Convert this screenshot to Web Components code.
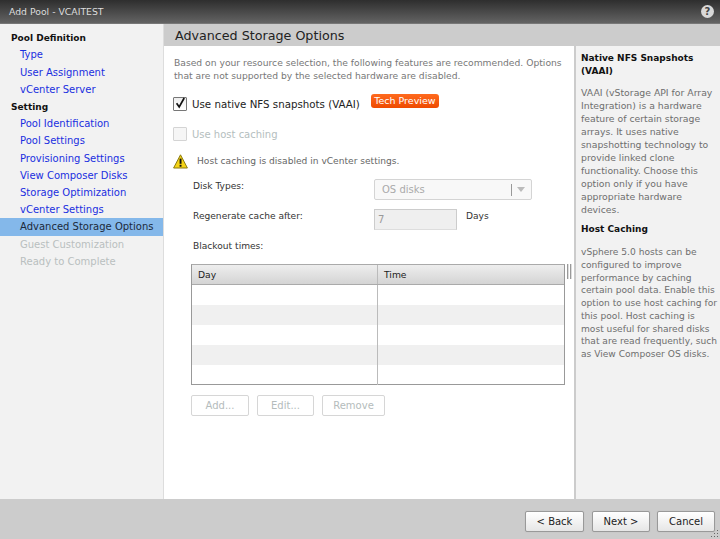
<!DOCTYPE html>
<html>
<head>
<meta charset="utf-8">
<title>Add Pool</title>
<style>
  html, body { margin: 0; padding: 0; background: #ccc; }
  body { font: 10px/13px "DejaVu Sans", sans-serif; color: #333; width: 720px; height: 539px; overflow: hidden; }
</style>
</head>
<body>
<pool-dialog heading="Add Pool - VCAITEST">
  <wizard-nav slot="nav">
    <nav-item kind="group">Pool Definition</nav-item>
    <nav-item>Type</nav-item>
    <nav-item>User Assignment</nav-item>
    <nav-item>vCenter Server</nav-item>
    <nav-item kind="group">Setting</nav-item>
    <nav-item>Pool Identification</nav-item>
    <nav-item>Pool Settings</nav-item>
    <nav-item>Provisioning Settings</nav-item>
    <nav-item>View Composer Disks</nav-item>
    <nav-item>Storage Optimization</nav-item>
    <nav-item>vCenter Settings</nav-item>
    <nav-item kind="current">Advanced Storage Options</nav-item>
    <nav-item kind="disabled">Guest Customization</nav-item>
    <nav-item kind="disabled">Ready to Complete</nav-item>
  </wizard-nav>
  <storage-options slot="main"></storage-options>
  <help-pane slot="help"></help-pane>
  <ui-button slot="footer" style="width:59px;margin-right:1px">&lt; Back</ui-button>
  <ui-button slot="footer" style="width:58px">Next &gt;</ui-button>
  <ui-button slot="footer" style="width:58px">Cancel</ui-button>
</pool-dialog>

<script>
/**
 * Small helper, every element here only needs a static shadow root
 */
class ShadowElement extends HTMLElement {
  static markup = '';
  constructor() {
    super();
    const shadowRoot = this.attachShadow({mode: 'open'});
    shadowRoot.innerHTML = this.constructor.markup;
  }
}

class PoolDialog extends ShadowElement {
  static markup = `
    <style>
      :host { display: grid; grid-template-rows: 23px 1px 475px 1fr; height: 539px; }
      .titlebar { display: flex; align-items: center; justify-content: space-between; padding: 0 6px 0 9px;
        background: linear-gradient(#2e2e2e, #636363); color: #ddd; font-size: 9.3px; }
      .help { width: 13px; height: 13px; border-radius: 50%; background: #d8d8d8; color: #444; font-weight: bold;
        font-size: 10px; line-height: 13px; text-align: center; }
      .rule { background: #777; }
      .body { display: grid; grid-template-columns: 163px 1fr; background: #fff; min-height: 0; }
      .footer { display: flex; justify-content: flex-end; align-items: flex-start; gap: 7px; padding: 12px 5px 0 0;
        background: #ccc; position: relative; }
      .grip { position: absolute; right: 1px; bottom: 1px; display: block; }
    </style>
    <div class="titlebar"><span id="title"></span><span class="help">?</span></div>
    <div class="rule"></div>
    <div class="body">
      <slot name="nav"></slot>
      <wizard-page>
        <slot name="main" slot="main"></slot>
        <slot name="help" slot="help"></slot>
      </wizard-page>
    </div>
    <div class="footer">
      <slot name="footer"></slot>
      <svg class="grip" width="8" height="8" viewBox="0 0 8 8" fill="#666">
        <rect x="6" y="0" width="1" height="1"/><rect x="3" y="3" width="1" height="1"/><rect x="6" y="3" width="1" height="1"/>
        <rect x="0" y="6" width="1" height="1"/><rect x="3" y="6" width="1" height="1"/><rect x="6" y="6" width="1" height="1"/>
      </svg>
    </div>`;
  connectedCallback() {
    this.shadowRoot.getElementById('title').textContent = this.getAttribute('heading');
  }
}

class WizardPage extends ShadowElement {
  static markup = `
    <style>
      :host { display: grid; grid-template-rows: 22px 1fr; min-height: 0; border-left: 1px solid #ddd; }
      .head { background: #ccc; color: #222; font-size: 12.7px; line-height: 23px; padding-left: 11px; }
      .cols { display: grid; grid-template-columns: 410px 1fr; min-height: 0; }
    </style>
    <div class="head">Advanced Storage Options</div>
    <div class="cols">
      <slot name="main"></slot>
      <slot name="help"></slot>
    </div>`;
}

class WizardNav extends ShadowElement {
  static markup = `
    <style>
      :host { display: block; background: #f2f2f2; padding-top: 5.3px; }
    </style>
    <slot></slot>`;
}

class NavItem extends ShadowElement {
  static markup = `
    <style>
      :host { display: block; height: 17.2px; line-height: 17px; padding-left: 20px; color: #1a2fe0; white-space: nowrap; }
      :host([kind="group"]) { padding-left: 11px; color: #111; font-weight: bold; font-size: 9px; line-height: 18px; }
      :host([kind="current"]) { background: #84b8ea; color: #1c2a3a; }
      :host([kind="disabled"]) { color: #b9bfbf; }
    </style>
    <slot></slot>`;
}

class TickBox extends ShadowElement {
  static markup = `
    <style>
      :host { display: flex; align-items: center; gap: 5px; height: 14px; color: #222; font-size: 10.25px; }
      :host([disabled]) { color: #b4bebe; font-size: 10px; }
      .box { box-sizing: border-box; width: 14px; height: 14px; border: 1px solid #777; border-radius: 1px; background: linear-gradient(#eee, #fff); display: block; }
      :host([disabled]) .box { border-color: #d4d4d4; background: #f6f6f6; }
      :host([disabled]) svg { display: none; }
      svg { display: block; margin: -1px 0 0 0; }
    </style>
    <span class="box"><svg width="12" height="12" viewBox="0 0 12 12"><path d="M2.6 6.2 L5.2 10 L10.2 1" fill="none" stroke="#111" stroke-width="1.7"/></svg></span>
    <slot></slot>`;
}

class StorageOptions extends ShadowElement {
  static markup = `
    <style>
      :host { display: block; padding: 10px 0 0 10px; color: #333; box-sizing: border-box; font-size: 9.1px; }
      .intro { color: #777; font-size: 9.2px; line-height: 13px; height: 26px; white-space: nowrap; }
      .vaai { display: flex; align-items: flex-start; margin: 8px 0 0 -1px; height: 30px; }
      .vaai tick-box { margin-top: 7px; }
      .badge { margin: 4px 0 0 11px; height: 14px; width: 68px; box-sizing: border-box; border-radius: 3px; background: linear-gradient(#ff6a1e, #ee4a00);
        color: #fff; font-size: 9.5px; line-height: 13px; text-align: center; }
      .host { margin: 7px 0 0 -1px; }
      .warn { display: flex; align-items: center; gap: 9px; margin: 12px 0 0 -1px; height: 16px; color: #666; }
      .warn svg { display: block; }
      .form { margin: 10px 0 0 19px; display: grid; grid-template-columns: 181px 158px auto; grid-template-rows: 21px 21px; row-gap: 9px; align-items: start; }
      .form .lbl { padding-top: 1px; }
      .select { box-sizing: border-box; width: 158px; height: 21px; border: 1px solid #d4d4d4; border-radius: 2px; background: #f8f8f8;
        color: #aaa; font-size: 10px; line-height: 19px; padding-left: 7px; display: flex; justify-content: space-between; }
      .arrow { display: flex; align-items: center; gap: 5px; padding-right: 6px; }
      .arrow i { display: block; width: 1px; height: 12px; background: #999; }
      .arrow b { display: block; width: 0; height: 0; border: 4px solid transparent; border-top: 5px solid #bbb; border-bottom: 0; }
      .row { display: flex; gap: 9px; grid-column: 2 / 4; }
      .input { box-sizing: border-box; width: 83px; height: 21px; border: 1px solid #ccc; border-bottom-color: #ddd; background: #efefef; color: #999; font-size: 10px; line-height: 20px; padding-left: 3px; }
      .days { color: #333; padding-top: 1px; }
      .black { margin: 10px 0 0 19px; height: 12px; line-height: 13px; }
      .tablewrap { display: flex; margin: 12px 0 0 17px; gap: 2px; }
      blackout-table, .tablewrap svg { flex: none; }
      .buttons { display: flex; gap: 8px; margin: 10px 0 0 17px; }
    </style>
    <div class="intro">Based on your resource selection, the following features are recommended. Options<br>that are not supported by the selected hardware are disabled.</div>
    <div class="vaai">
      <tick-box>Use native NFS snapshots (VAAI)</tick-box>
      <span class="badge">Tech Preview</span>
    </div>
    <tick-box class="host" disabled>Use host caching</tick-box>
    <div class="warn">
      <svg width="15" height="15" viewBox="0 0 15 15">
        <path d="M7.5 .8 L14.4 14 H.6 Z" fill="#f5d316" stroke="#8a7a10" stroke-width="1" stroke-linejoin="round"/>
        <rect x="6.6" y="4.6" width="1.9" height="5.2" fill="#111"/><rect x="6.6" y="10.8" width="1.9" height="1.9" fill="#111"/>
      </svg>
      <span>Host caching is disabled in vCenter settings.</span>
    </div>
    <div class="form">
      <span class="lbl">Disk Types:</span>
      <div class="select" style="grid-column:2/4"><span>OS disks</span><span class="arrow"><i></i><b></b></span></div>
      <span class="lbl">Regenerate cache after:</span>
      <div class="row"><div class="input">7</div><span class="days">Days</span></div>
    </div>
    <div class="black">Blackout times:</div>
    <div class="tablewrap">
      <blackout-table></blackout-table>
      <svg width="5" height="15" viewBox="0 0 5 15" style="display:block"><path d="M.5 0V15M3.5 0V15" stroke="#999"/><path d="M1.5 0V15M4.5 0V15" stroke="#ddd"/></svg>
    </div>
    <div class="buttons">
      <ui-button disabled style="width:58px">Add...</ui-button>
      <ui-button disabled style="width:57px">Edit...</ui-button>
      <ui-button disabled style="width:63px">Remove</ui-button>
    </div>`;
}

class BlackoutTable extends ShadowElement {
  static markup = `
    <style>
      :host { display: block; box-sizing: border-box; width: 374px; height: 121px; border: 1px solid #999; border-top-color: #aaa; font-size: 9.2px; }
      .row { display: grid; grid-template-columns: 185px 1fr; height: 20px; }
      .row > div + div { border-left: 1px solid #bbb; }
      .row.head { background: linear-gradient(#eee, #d4d4d4); color: #222; line-height: 19px; height: 19px; border-bottom: 1px solid #aaa; }
      .row.head > div { padding-left: 6px; }
      .row.alt { background: #f0f0f0; }
    </style>
    <div class="row head"><div>Day</div><div>Time</div></div>
    <div class="row"><div></div><div></div></div>
    <div class="row alt"><div></div><div></div></div>
    <div class="row"><div></div><div></div></div>
    <div class="row alt"><div></div><div></div></div>
    <div class="row"><div></div><div></div></div>`;
}

class HelpPane extends ShadowElement {
  static markup = `
    <style>
      :host { display: block; box-sizing: border-box; height: 100%; background: #f2f2f2; border-left: 2px solid #ccc; padding: 6px 0 0 5px; color: #6e6e6e; font-size: 9.3px; line-height: 13px; white-space: nowrap; }
      h3 { margin: 0; font-size: 9px; line-height: 13px; color: #111; font-weight: bold; }
      p { margin: 8px 0 0; }
      p.second { margin-top: 10px; line-height: 12.75px; font-size: 9.1px; }
      h3.next { margin-top: 7px; }
    </style>
    <h3>Native NFS Snapshots<br>(VAAI)</h3>
    <p>VAAI (vStorage API for Array<br>Integration) is a hardware<br>feature of certain storage<br>arrays. It uses native<br>snapshotting technology to<br>provide linked clone<br>functionality. Choose this<br>option only if you have<br>appropriate hardware<br>devices.</p>
    <h3 class="next">Host Caching</h3>
    <p class="second">vSphere 5.0 hosts can be<br>configured to improve<br>performance by caching<br>certain pool data. Enable this<br>option to use host caching for<br>this pool. Host caching is<br>most useful for shared disks<br>that are read frequently, such<br>as View Composer OS disks.</p>`;
}

class UiButton extends ShadowElement {
  static markup = `
    <style>
      :host { display: flex; align-items: center; justify-content: center; box-sizing: border-box; width: 59px; height: 21px; border: 1px solid #999; border-radius: 2px;
        background: linear-gradient(#fff, #e6e6e6); color: #222; font-size: 10px; box-shadow: 0 0 1px #aaa; }
      :host([disabled]) { border-color: #d6d6d6; background: #fff; color: #b4bcbc; box-shadow: none; }
    </style>
    <slot></slot>`;
}

customElements.define('nav-item', NavItem);
customElements.define('wizard-nav', WizardNav);
customElements.define('tick-box', TickBox);
customElements.define('ui-button', UiButton);
customElements.define('blackout-table', BlackoutTable);
customElements.define('storage-options', StorageOptions);
customElements.define('help-pane', HelpPane);
customElements.define('wizard-page', WizardPage);
customElements.define('pool-dialog', PoolDialog);
</script>
</body>
</html>
